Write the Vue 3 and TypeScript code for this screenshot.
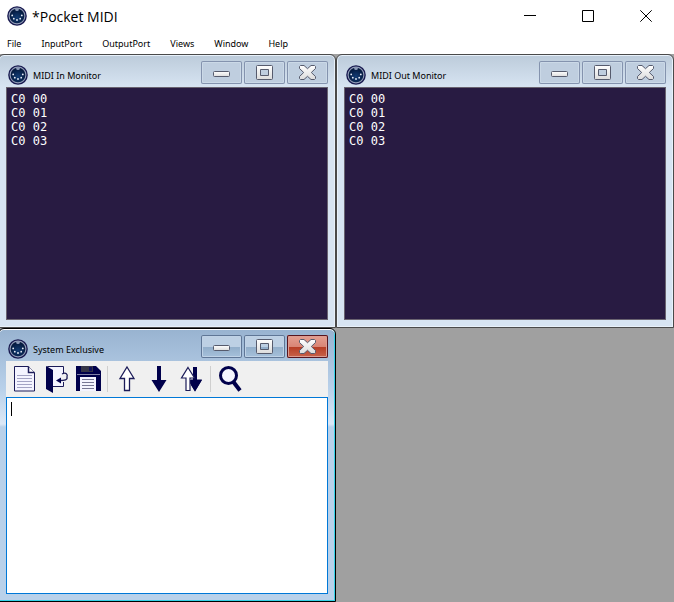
<script setup lang="ts">
import { ref } from 'vue'

interface MidiWindow {
  id: string
  title: string
  kind: 'monitor' | 'sysex'
  lines: string[]
}

const menus: string[] = ['File', 'InputPort', 'OutputPort', 'Views', 'Window', 'Help']
const received: string[] = ['C0 00', 'C0 01', 'C0 02', 'C0 03']

const windows: MidiWindow[] = [
  { id: 'in', title: 'MIDI In Monitor', kind: 'monitor', lines: received },
  { id: 'out', title: 'MIDI Out Monitor', kind: 'monitor', lines: received },
  { id: 'sysex', title: 'System Exclusive', kind: 'sysex', lines: [] },
]

const sysex = ref('')
</script>

<template>
  <div class="app">
    <!-- shared symbols -->
    <svg class="defs" aria-hidden="true">
      <defs>
        <radialGradient id="din-face" cx="50%" cy="60%" r="55%">
          <stop offset="0" stop-color="#123c74" />
          <stop offset="1" stop-color="#031638" />
        </radialGradient>
        <linearGradient id="glyph" x1="0" y1="0" x2="0" y2="1">
          <stop offset="0" stop-color="#ffffff" />
          <stop offset="1" stop-color="#dcdcdc" />
        </linearGradient>
        <symbol id="din" viewBox="0 0 20 20">
          <circle cx="10" cy="10" r="9.8" fill="#17194f" />
          <circle cx="10" cy="10" r="7.9" fill="url(#din-face)" stroke="#929db8" stroke-width="1.1" />
          <path d="M8.2 2.2h3.6v1.6a1.8 1.3 0 0 1-3.6 0z" fill="#8d9bb8" />
          <g fill="#e8eef8">
            <circle cx="5.200" cy="9.400" r=".9" />
            <circle cx="6.800" cy="12.700" r=".9" />
            <circle cx="10" cy="14" r=".9" />
            <circle cx="13.200" cy="12.700" r=".9" />
            <circle cx="14.800" cy="9.400" r=".9" />
          </g>
        </symbol>
      </defs>
    </svg>

    <header class="titlebar">
      <svg class="logo" aria-hidden="true"><use href="#din" /></svg>
      <h1>*Pocket MIDI</h1>
      <div class="caption">
        <button type="button" aria-label="Minimize">
          <svg viewBox="0 0 12 12"><path d="M0 5.5h12" /></svg>
        </button>
        <button type="button" aria-label="Maximize">
          <svg viewBox="0 0 12 12"><path d="M.5.5h11v11H.5z" /></svg>
        </button>
        <button type="button" aria-label="Close">
          <svg viewBox="0 0 12 12"><path d="M.3.3l11.4 11.4M11.7.3L.3 11.7" /></svg>
        </button>
      </div>
    </header>

    <nav class="menubar">
      <button v-for="menu in menus" :key="menu" type="button">{{ menu }}</button>
    </nav>

    <main class="workspace">
      <section
        v-for="win in windows"
        :key="win.id"
        class="window"
        :class="{ active: win.kind === 'sysex' }"
      >
        <header class="window-head">
          <svg class="logo" aria-hidden="true"><use href="#din" /></svg>
          <h2>{{ win.title }}</h2>
          <div class="window-buttons">
            <button type="button" aria-label="Minimize">
              <svg viewBox="0 0 41 23">
                <rect x="12.5" y="10.5" width="16" height="5" rx="1" fill="url(#glyph)" stroke="#565b6d" />
              </svg>
            </button>
            <button type="button" aria-label="Maximize">
              <svg viewBox="0 0 41 23">
                <path
                  d="M13.5 4.5h14a1 1 0 0 1 1 1v12a1 1 0 0 1-1 1h-14a1 1 0 0 1-1-1v-12a1 1 0 0 1 1-1zM16.5 8.5v6h8v-6z"
                  fill="url(#glyph)" fill-rule="evenodd" stroke="#565b6d"
                />
              </svg>
            </button>
            <button type="button" class="close" aria-label="Close">
              <svg viewBox="0 0 41 23">
                <path
                  d="M13.500 4.500h3.500l3.500 3.200 3.500-3.200h3.500l1 1v2l-4.200 4 4.200 4v2l-1 1h-3.500l-3.500-3.200-3.500 3.200h-3.500l-1-1v-2l4.200-4-4.200-4v-2z"
                  fill="url(#glyph)" stroke="#565b6d" stroke-linejoin="round"
                />
              </svg>
            </button>
          </div>
        </header>

        <ol v-if="win.kind === 'monitor'" class="monitor">
          <li v-for="line in win.lines" :key="line">{{ line }}</li>
        </ol>

        <template v-else>
          <div class="toolbar" role="toolbar">
            <button type="button" aria-label="New">
              <svg viewBox="0 0 28 28">
                <path d="M4.5 1.5h14l6 6v18.500h-20z" fill="#f4f4ff" stroke="#1b1b58" />
                <path d="M18.500 1.500v6h6" fill="#fff" stroke="#1b1b58" stroke-width="1.500" />
                <path d="M7 10.500h15M7 13.500h15M7 16.500h15M7 19.500h15M7 22.500h15" stroke="#a3a3c4" />
              </svg>
            </button>
            <button type="button" aria-label="Open">
              <svg viewBox="0 0 28 28">
                <path d="M5.500 1.500h16v20h-12z" fill="#f4f4ff" stroke="#1b1b58" />
                <path d="M4 1l7 4v23l-7-4z" fill="#00004b" />
                <path d="M19 9h4v8h-4z" fill="#f0f0f4" />
                <path d="M20 9c4-2 6 .2 5 3 .8 2.800-2 3.500-8 3.500" fill="none" stroke="#1b1b58" stroke-width="1.300" />
                <path d="M14 15.500l5-3v6z" fill="#00004b" />
              </svg>
            </button>
            <button type="button" aria-label="Save">
              <svg viewBox="0 0 28 28">
                <path d="M2 1h20l5 5v20H2z" fill="#00004b" />
                <path d="M7 1h12v6H7z" fill="#353546" />
                <path d="M15 2h3v4h-3z" fill="#12125a" />
                <path d="M3 9.500h23" stroke="#b9b9d0" stroke-width=".7" />
                <path d="M6 12h16v14H6z" fill="#f4f4ff" />
                <path d="M8 14.500h12M8 17.500h12M8 20.500h12M8 23.500h12" stroke="#777795" />
              </svg>
            </button>
            <span class="divider"></span>
            <button type="button" aria-label="Send">
              <svg viewBox="0 0 28 28">
                <path d="M14 2l7 11.500h-4.500v12h-5v-12H7z" fill="#fff" stroke="#1b1b58" stroke-width="1.300" />
              </svg>
            </button>
            <button type="button" aria-label="Receive">
              <svg viewBox="0 0 28 28">
                <path d="M12 1h4v14h5.500L14 27 6.500 15H12z" fill="#00004b" />
              </svg>
            </button>
            <button type="button" aria-label="Send and receive">
              <svg viewBox="0 0 28 28">
                <path d="M16 2h4v13h5l-7 11.500L11 15h5z" fill="#00004b" />
                <path d="M11 2.500l6.500 10.500H13v12.500H9V13H4.500z" fill="#fff" stroke="#1b1b58" stroke-width="1.200" />
                <path d="M14 14.500h11L18 26.500 14 20z" fill="#00004b" />
              </svg>
            </button>
            <span class="divider"></span>
            <button type="button" aria-label="Find">
              <svg viewBox="0 0 28 28">
                <circle cx="12.500" cy="10.500" r="8" fill="#f4f4ff" stroke="#00004b" stroke-width="3" />
                <path d="M17.500 17l6.500 8.500" stroke="#00004b" stroke-width="4" />
              </svg>
            </button>
          </div>
          <div class="editor">
            <textarea v-model="sysex" aria-label="System exclusive data" spellcheck="false"></textarea>
            <span class="caret"></span>
          </div>
        </template>
      </section>
    </main>
  </div>
</template>

<style>
body {
  margin: 0;
  background: #a0a0a0;
}
</style>

<style scoped>
.app {
  display: flex;
  flex-direction: column;
  min-height: 100vh;
  overflow: hidden;
  background: #fff;
  color: #000;
  font-family: 'Noto Sans', 'Open Sans', sans-serif;
}

.app * {
  box-sizing: border-box;
}

.defs {
  position: absolute;
  width: 0;
  height: 0;
}

button {
  padding: 0;
  border: 0;
  background: none;
  color: inherit;
  font: inherit;
}

svg {
  display: block;
}

.logo {
  flex: none;
  width: 20px;
  height: 20px;
}

.titlebar {
  display: flex;
  align-items: center;
  height: 32px;
  padding-left: 7px;
}

h1 {
  flex: 1;
  margin: 0 0 0 5px;
  padding-top: 2px;
  font-family: 'Open Sans', 'Noto Sans', sans-serif;
  font-size: 14px;
  font-weight: 400;
  line-height: 20px;
}

.caption {
  display: flex;
  gap: 2px;
}

.caption button {
  display: grid;
  place-items: center;
  width: 56px;
  height: 32px;
}

.caption svg {
  width: 12px;
  height: 12px;
  fill: none;
  stroke: #000;
}

.menubar {
  display: flex;
  gap: 20px;
  height: 22px;
  padding: 2px 7px 0;
  font-size: 9px;
  line-height: 20px;
}

.workspace {
  flex: 1;
  display: grid;
  grid-template-columns: 1fr 1fr;
  grid-template-rows: 1fr 1fr;
  margin-left: -2px;
  background: #a0a0a0;
}

.window {
  display: flex;
  flex-direction: column;
  padding: 0 7px 7px;
  border: 1px solid #4a4a4a;
  border-radius: 6px 6px 0 0;
  background: linear-gradient(#bccbda, #d7e4f2 32px);
  box-shadow: inset 0 0 0 1px #e8f1fa;
}

.window.active {
  border-color: #000;
  background: linear-gradient(#98b3d0, #b9d1ea 60px, #dce8f6 95px, #b9d1ea 98px);
  box-shadow: inset 0 1px 0 #fff, inset -1px -1px 0 #35d2e8;
}

.window-head {
  display: flex;
  height: 32px;
}

.window-head .logo {
  margin: 10px 5px 0 2px;
}

h2 {
  flex: 1;
  margin: 9px 0 0;
  font-size: 9px;
  font-weight: 400;
  line-height: 23px;
}

.window-buttons {
  display: flex;
  gap: 2px;
  padding-top: 6px;
}

.window-buttons button {
  width: 41px;
  height: 23px;
  border-radius: 2px;
  background: #bfcedf;
  box-shadow: inset 0 0 0 1px #8493ae, inset 0 0 0 2px #cbd9e7;
}

.window-buttons svg {
  width: 41px;
  height: 23px;
}

.active .window-buttons button {
  background: linear-gradient(#bdd0e4 50%, #91adc9 50%, #a7c2dc);
  box-shadow: inset 0 0 0 1px #5f7696, inset 0 0 0 2px #bfd2e6;
}

.active .window-buttons .close {
  background: linear-gradient(#e5a194, #d98676 50%, #b53b23 50%, #c9664e);
  box-shadow: inset 0 0 0 1px #57151f, inset 0 0 0 2px #dc9c91;
}

.monitor {
  flex: 1;
  margin: 0;
  padding: 4px;
  border: 1px solid #696370;
  background: #281b42;
  color: #fff;
  font-family: 'DejaVu Sans Mono', 'Liberation Mono', monospace;
  font-size: 12px;
  line-height: 14px;
  list-style: none;
}

.toolbar {
  display: flex;
  align-items: center;
  gap: 4px;
  height: 36px;
  padding-left: 4px;
  background: #f0f0f0;
}

.toolbar svg {
  width: 28px;
  height: 28px;
}

.divider {
  width: 1px;
  height: 26px;
  margin: 0 1px;
  background: #cfcfcf;
}

.editor {
  position: relative;
  flex: 1;
  display: flex;
  border: 1px solid #0078d7;
}

textarea {
  flex: 1;
  min-width: 0;
  padding: 4px;
  border: 0;
  outline: 0;
  background: #fff;
  caret-color: transparent;
  font-family: 'DejaVu Sans Mono', 'Liberation Mono', monospace;
  font-size: 12px;
  line-height: 14px;
  resize: none;
}

.caret {
  position: absolute;
  top: 4px;
  left: 4px;
  width: 1px;
  height: 14px;
  background: #000;
}
</style>
